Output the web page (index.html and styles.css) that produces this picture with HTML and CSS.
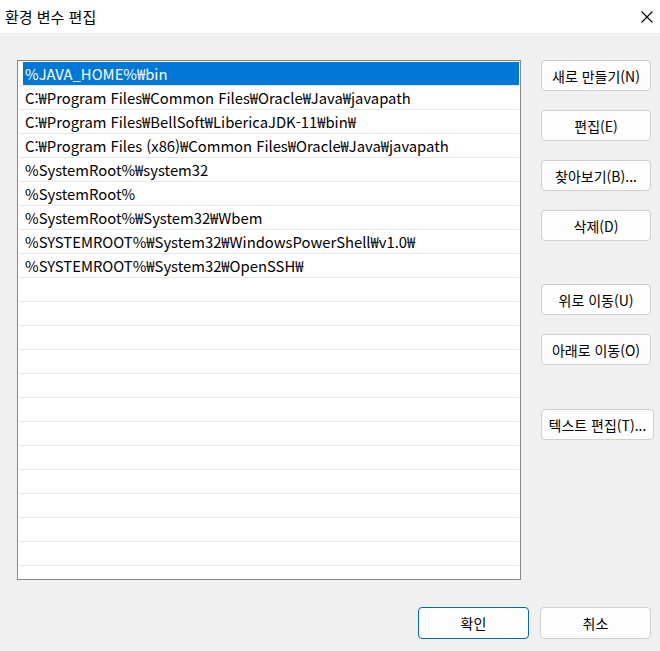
FILE: index.html
```html
<!DOCTYPE html>
<html lang="ko">
<head>
<meta charset="utf-8">
<title>환경 변수 편집</title>
<link rel="stylesheet" href="styles.css">
</head>
<body>
<div class="window">
  <div class="titlebar">
    <span class="title">환경 변수 편집</span>
    <svg class="close" width="12" height="12" viewBox="0 0 12 12"><path d="M0.5 0.5 L11.5 11.5 M11.5 0.5 L0.5 11.5" stroke="#000" stroke-width="1.1" fill="none"/></svg>
  </div>
  <div class="body">
    <div class="main">
      <div class="list">
        <div class="row selected"><span class="sel">%JAVA_HOME%₩bin</span></div>
        <div class="row"><span class="txt">C:₩Program Files₩Common Files₩Oracle₩Java₩javapath</span></div>
        <div class="row"><span class="txt">C:₩Program Files₩BellSoft₩LibericaJDK-11₩bin₩</span></div>
        <div class="row"><span class="txt">C:₩Program Files (x86)₩Common Files₩Oracle₩Java₩javapath</span></div>
        <div class="row"><span class="txt">%SystemRoot%₩system32</span></div>
        <div class="row"><span class="txt">%SystemRoot%</span></div>
        <div class="row"><span class="txt">%SystemRoot%₩System32₩Wbem</span></div>
        <div class="row"><span class="txt">%SYSTEMROOT%₩System32₩WindowsPowerShell₩v1.0₩</span></div>
        <div class="row"><span class="txt">%SYSTEMROOT%₩System32₩OpenSSH₩</span></div>
        <div class="row"></div><div class="row"></div><div class="row"></div><div class="row"></div>
        <div class="row"></div><div class="row"></div><div class="row"></div><div class="row"></div>
        <div class="row"></div><div class="row"></div><div class="row"></div><div class="row"></div>
        <div class="row"></div>
      </div>
      <div class="side">
        <div class="group">
          <button class="btn">새로 만들기(N)</button>
          <button class="btn">편집(E)</button>
          <button class="btn">찾아보기(B)...</button>
          <button class="btn">삭제(D)</button>
        </div>
        <div class="group move">
          <button class="btn">위로 이동(U)</button>
          <button class="btn">아래로 이동(O)</button>
        </div>
        <div class="group textedit">
          <button class="btn wide">텍스트 편집(T)...</button>
        </div>
      </div>
    </div>
    <div class="footer">
      <button class="btn default">확인</button>
      <button class="btn">취소</button>
    </div>
  </div>
</div>
</body>
</html>
```

FILE: styles.css
```css
html, body {
  margin: 0;
  padding: 0;
}
body {
  width: 660px;
  height: 651px;
  overflow: hidden;
  font-family: "Noto Sans CJK KR", "Noto Sans", sans-serif;
  color: #000;
  background: #f0f0f0;
}
.window {
  width: 660px;
  height: 651px;
  display: flex;
  flex-direction: column;
}
.titlebar {
  height: 33px;
  background: #fff;
  display: flex;
  align-items: center;
  justify-content: space-between;
  padding: 0 7px 0 5px;
  flex-shrink: 0;
}
.title {
  font-size: 15px;
  line-height: 1;
  margin-top: -1px;
}
.close {
  display: block;
}
.body {
  flex: 1;
  padding: 27px 9px 0 17px;
  display: flex;
  flex-direction: column;
}
.main {
  display: flex;
  align-items: flex-start;
}
.list {
  flex-shrink: 0;
  border: 1px solid #828790;
  background: #fff;
  overflow: hidden;
  padding: 1px 1px 0 1px;
  box-sizing: content-box;
  width: 500px;
  height: 517px;
}
.row {
  height: 23px;
  border-bottom: 1px solid #e8e8e8;
  display: flex;
  align-items: stretch;
  font-size: 14.8px;
  white-space: nowrap;
}
.txt {
  padding-left: 6px;
  line-height: 24px;
}
.selected {
  padding-left: 4px;
}
.sel {
  flex: 1;
  background: #0078d7;
  color: #fff;
  padding-left: 2px;
  line-height: 24px;
}
.side {
  margin-left: 20px;
  width: 110px;
  flex-shrink: 0;
  display: flex;
  flex-direction: column;
}
.group {
  display: flex;
  flex-direction: column;
  gap: 19px;
}
.move {
  margin-top: 43px;
}
.textedit {
  margin-top: 44px;
}
.btn {
  width: 110px;
  height: 31px;
  box-sizing: border-box;
  border: 1px solid #d0d0d0;
  border-radius: 4px;
  background: #fdfdfd;
  font-family: "Noto Sans CJK KR", "Noto Sans", sans-serif;
  font-size: 14px;
  color: #000;
  padding: 0;
  white-space: nowrap;
  display: flex;
  align-items: center;
  justify-content: center;
}
.wide {
  width: 113px;
}
.footer {
  margin-top: 27px;
  display: flex;
  justify-content: flex-end;
  gap: 11px;
}
.footer .btn {
  width: 111px;
  height: 32px;
}
.default {
  border: 1px solid #0067c0;
}
```
